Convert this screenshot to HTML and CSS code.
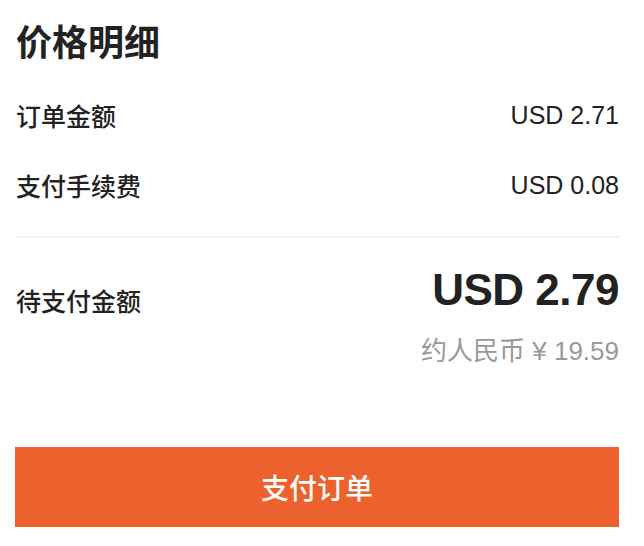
FILE: index.html
```html
<!DOCTYPE html>
<html lang="zh-CN">
<head>
    <meta charset="UTF-8">
    <meta name="viewport" content="width=device-width, initial-scale=1.0">
    <title>价格明细</title>
    <link rel="stylesheet" href="styles.css">
</head>
<body>
    <div class="detalle">
        <h1>价格明细</h1>

        <div class="fila">
            <span class="etiqueta">订单金额</span>
            <span class="valor">USD 2.71</span>
        </div>
        <div class="fila">
            <span class="etiqueta">支付手续费</span>
            <span class="valor">USD 0.08</span>
        </div>

        <div class="divisor"></div>

        <div class="total">
            <span class="etiqueta total-etiqueta">待支付金额</span>
            <div class="total-montos">
                <div class="total-valor">USD 2.79</div>
                <div class="total-rmb">约人民币 ¥ 19.59</div>
            </div>
        </div>

        <button class="pagar">支付订单</button>
    </div>
</body>
</html>
```

FILE: styles.css
```css
body {
    font-family: "Liberation Sans", "Noto Sans CJK SC", sans-serif;
    background-color: #fff;
    color: #222;
    margin: 0;
    padding: 0;
}

.detalle {
    padding: 19px 25px 0 15px;
}

h1 {
    margin: 0;
    font-size: 36px;
    line-height: 50px;
    font-weight: 700;
    color: #222;
    padding-left: 1px;
}

.fila {
    display: flex;
    justify-content: space-between;
    align-items: center;
    height: 70px;
    margin-top: 11px;
}

.fila + .fila {
    margin-top: 0;
}

.etiqueta {
    font-size: 25px;
    font-weight: 500;
    padding-left: 1px;
}

.valor {
    font-size: 25px;
}

.divisor {
    height: 2px;
    background-color: #f2f2f2;
    margin-top: 16px;
}

.total {
    display: flex;
    justify-content: space-between;
    align-items: flex-start;
    margin-top: 22px;
}

.total-etiqueta {
    line-height: 36px;
    margin-top: 24px;
}

.total-montos {
    text-align: right;
}

.total-valor {
    font-size: 44px;
    font-weight: 700;
    line-height: 60px;
    letter-spacing: -0.5px;
}

.total-rmb {
    font-size: 26px;
    line-height: 36px;
    color: #999;
    margin-top: 13px;
}

.pagar {
    display: block;
    width: 100%;
    height: 80px;
    margin-top: 78px;
    background-color: #ec612e;
    color: #fff;
    border: none;
    border-radius: 0;
    font-family: inherit;
    font-size: 28px;
    font-weight: 500;
    cursor: pointer;
}
```
